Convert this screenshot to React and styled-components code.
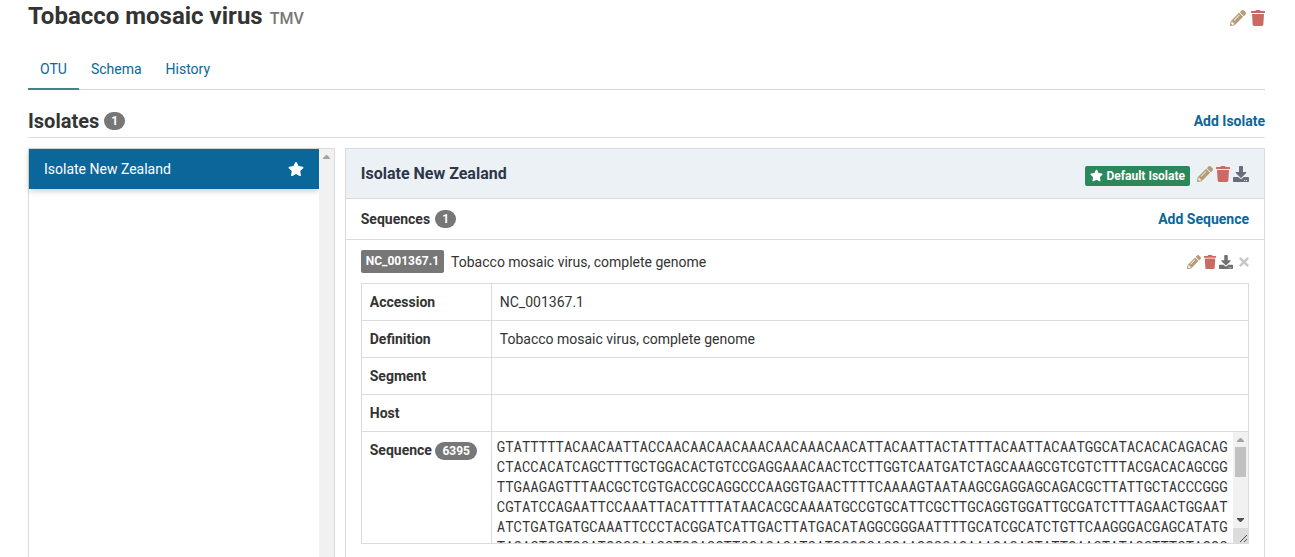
import React from "react";
import styled, { createGlobalStyle } from "styled-components";
import { FaPencilAlt, FaTrash, FaDownload, FaTimes, FaStar } from "react-icons/fa";

const GlobalStyle = createGlobalStyle`
  *, *::before, *::after { box-sizing: border-box; }
  body {
    margin: 0;
    background: #fff;
    color: #333;
    font-family: Roboto, "Liberation Sans", sans-serif;
    font-size: 14px;
    line-height: 20px;
  }
  h1, h2, h3, h4 { margin: 0; }
  a { color: #0b6699; text-decoration: none; }
`;

const Page = styled.main`
  display: flex;
  flex-direction: column;
  height: 100vh;
  overflow: hidden;
  padding: 0 30px 0 28px;
`;

const PageHeader = styled.header`
  display: flex;
  align-items: center;
  justify-content: space-between;
  flex: none;
  height: 34px;
`;

const Title = styled.h1`
  display: flex;
  align-items: baseline;
  gap: 7px;
  font-size: 24px;
  line-height: 32px;
  font-weight: 700;
`;

const Abbreviation = styled.small`
  color: #777;
  font-size: 16px;
  font-weight: 500;
`;

const IconGroup = styled.div`
  display: flex;
  align-items: flex-start;
  gap: ${(p) => p.$gap || 3}px;
  height: ${(p) => p.$height || 16}px;
`;

const IconButton = styled.button`
  display: flex;
  justify-content: center;
  width: ${(p) => p.$width || p.$size || 16}px;
  padding: 0;
  border: 0;
  background: none;
  cursor: pointer;
  color: ${(p) => p.$color};
  font-size: ${(p) => p.$size || 16}px;
  svg { flex: none; }
`;

const CloseButton = styled(IconButton)`
  margin-left: 3px;
`;

const Tabs = styled.nav`
  display: flex;
  flex: none;
  margin-top: 14px;
  border-bottom: 1px solid #d5d5d5;
`;

const Tab = styled.a`
  margin-bottom: -1px;
  padding: 11px 12px 9px;
  border-bottom: 2px solid ${(p) => (p.$active ? "#3c8786" : "transparent")};
`;

const SectionHeader = styled.div`
  display: flex;
  align-items: center;
  justify-content: space-between;
  flex: none;
  height: 34px;
  margin: 14px 0 10px;
  border-bottom: 1px solid #dbdbdb;
`;

const Heading = styled.h2`
  display: flex;
  align-items: center;
  gap: 5px;
  font-size: ${(p) => p.$size}px;
  font-weight: 700;
`;

const Badge = styled.span`
  display: inline-block;
  padding: 3px 7px;
  border-radius: 10px;
  background: #777;
  color: #fff;
  font-size: 12px;
  line-height: 12px;
  font-weight: 700;
`;

const AddLink = styled.a`
  font-weight: 700;
`;

const Columns = styled.div`
  display: grid;
  grid-template-columns: minmax(0, 1fr) minmax(0, 3fr);
  gap: 10px;
  flex: 1 0 auto;
`;

const IsolateList = styled.div`
  display: flex;
  min-height: 430px;
  border: 1px solid #dbdbdb;
`;

const IsolateItems = styled.div`
  flex: 1;
  min-width: 0;
`;

const IsolateItem = styled.button`
  display: flex;
  align-items: center;
  justify-content: space-between;
  width: 100%;
  height: 40px;
  padding: 0 15px;
  border: 0;
  background: #0b6699;
  box-shadow: 0 2px 6px rgba(0, 0, 0, 0.2);
  color: #fff;
  font: inherit;
  text-align: left;
  svg { font-size: 16px; }
`;

const ScrollTrack = styled.div`
  position: relative;
  display: flex;
  flex-direction: column;
  flex: none;
  width: 15px;
  background: #f1f1f1;
`;

const ScrollArrow = styled.svg`
  display: block;
  flex: none;
  width: 15px;
  height: 15px;
  fill: ${(p) => (p.$enabled ? "#505050" : "#a3a3a3")};
`;

const ScrollThumb = styled.div`
  height: 30px;
  margin: 0 2px auto;
  background: #c1c1c1;
`;

const ResizeCorner = styled.svg`
  display: block;
  flex: none;
  width: 15px;
  height: 15px;
  background: #dcdcdc;
  stroke: #505050;
`;

const Panel = styled.section`
  border: 1px solid #dbdbdb;
`;

const PanelHeader = styled.header`
  display: flex;
  align-items: center;
  justify-content: space-between;
  height: 50px;
  padding: 0 15px;
  border-bottom: 1px solid #dbdbdb;
  background: #ecf1f6;
  color: #2d3748;
`;

const DefaultLabel = styled.span`
  display: flex;
  align-items: center;
  gap: 3px;
  height: 20px;
  margin-right: 4px;
  padding: 0 5px;
  border-radius: 2px;
  background: #2b885a;
  color: #fff;
  font-size: 12px;
  font-weight: 700;
  svg { font-size: 13px; }
`;

const PanelRow = styled.div`
  display: flex;
  align-items: center;
  justify-content: space-between;
  height: 41px;
  padding: 0 15px;
  border-bottom: 1px solid #dbdbdb;
`;

const SequenceItem = styled.article`
  padding: 10px 15px 15px;
`;

const SequenceHeader = styled.header`
  display: flex;
  align-items: center;
  justify-content: space-between;
  height: 23px;
  margin-bottom: 10px;
`;

const SequenceTitle = styled.div`
  display: flex;
  align-items: center;
  gap: 7px;
`;

const AccessionLabel = styled.span`
  padding: 1px 5px 2px;
  border-radius: 2px;
  background: #777;
  color: #fff;
  font-size: 12px;
  font-weight: 700;
`;

const DataTable = styled.table`
  width: 100%;
  border-collapse: collapse;
  table-layout: fixed;
`;

const HeadCell = styled.th`
  width: 130px;
  height: 37px;
  padding: 8px;
  border: 1px solid #dbdbdb;
  text-align: left;
  vertical-align: top;
  font-weight: 700;
  white-space: nowrap;
`;

const DataCell = styled.td`
  padding: ${(p) => (p.$flush ? "0" : "8px")};
  border: 1px solid #dbdbdb;
`;

const SequenceBox = styled.div`
  display: flex;
  height: 111px;
`;

const SequenceText = styled.textarea`
  flex: 1;
  min-width: 0;
  padding: 5px 0 5px 5px;
  border: 0;
  outline: 0;
  color: #333;
  background: #fff;
  font-family: "Roboto Mono", "Liberation Mono", monospace;
  font-size: 14px;
  line-height: 20px;
  word-break: break-all;
  resize: none;
  scrollbar-width: none;
`;

const GENOME = [
  "GTATTTTTACAACAATTACCAACAACAACAAACAACAAACAACATTACAATTACTATTTACAATTACAATGGCATACACACAGACAG",
  "CTACCACATCAGCTTTGCTGGACACTGTCCGAGGAAACAACTCCTTGGTCAATGATCTAGCAAAGCGTCGTCTTTACGACACAGCGG",
  "TTGAAGAGTTTAACGCTCGTGACCGCAGGCCCAAGGTGAACTTTTCAAAAGTAATAAGCGAGGAGCAGACGCTTATTGCTACCCGGG",
  "CGTATCCAGAATTCCAAATTACATTTTATAACACGCAAAATGCCGTGCATTCGCTTGCAGGTGGATTGCGATCTTTAGAACTGGAAT",
  "ATCTGATGATGCAAATTCCCTACGGATCATTGACTTATGACATAGGCGGGAATTTTGCATCGCATCTGTTCAAGGGACGAGCATATG",
  "TACACTGCTGCATGCCCAACCTGGACGTTCGAGACATCATGCGGCACGAAGGCCAGAAAGACAGTATTGAACTATACCTTTCTAGGC",
].join("");

const FIELDS = [
  ["Accession", "NC_001367.1"],
  ["Definition", "Tobacco mosaic virus, complete genome"],
  ["Segment", ""],
  ["Host", ""],
];

const TAN = "#b39d76";
const RED = "#c96b62";

function UpArrow() {
  return (
    <ScrollArrow viewBox="0 0 15 15" aria-hidden="true">
      <path d="M7 6h1l3 3v1H4V9z" />
    </ScrollArrow>
  );
}

function DownArrow() {
  return (
    <ScrollArrow viewBox="0 0 15 15" aria-hidden="true" $enabled>
      <path d="M4 5h7v1L8 9H7L4 6z" />
    </ScrollArrow>
  );
}

export default function App() {
  return (
    <>
      <GlobalStyle />
      <Page>
        <PageHeader>
          <Title>
            Tobacco mosaic virus <Abbreviation>TMV</Abbreviation>
          </Title>
          <IconGroup $gap={5} $height={14}>
            <IconButton aria-label="Edit OTU" $color={TAN}><FaPencilAlt /></IconButton>
            <IconButton aria-label="Remove OTU" $width={14} $color={RED}><FaTrash /></IconButton>
          </IconGroup>
        </PageHeader>
        <Tabs>
          <Tab href="#otu" $active>OTU</Tab>
          <Tab href="#schema">Schema</Tab>
          <Tab href="#history">History</Tab>
        </Tabs>
        <SectionHeader>
          <Heading $size={20}>Isolates <Badge>1</Badge></Heading>
          <AddLink href="#add-isolate">Add Isolate</AddLink>
        </SectionHeader>
        <Columns>
          <IsolateList>
            <IsolateItems>
              <IsolateItem>Isolate New Zealand <FaStar /></IsolateItem>
            </IsolateItems>
            <ScrollTrack><UpArrow /></ScrollTrack>
          </IsolateList>
          <Panel>
            <PanelHeader>
              <Heading as="h3" $size={16}>Isolate New Zealand</Heading>
              <IconGroup>
                <DefaultLabel><FaStar />Default Isolate</DefaultLabel>
                <IconButton aria-label="Edit isolate" $color={TAN}><FaPencilAlt /></IconButton>
                <IconButton aria-label="Remove isolate" $width={14} $color={RED}><FaTrash /></IconButton>
                <IconButton aria-label="Download isolate" $color="#666e7c"><FaDownload /></IconButton>
              </IconGroup>
            </PanelHeader>
            <PanelRow>
              <Heading as="h4" $size={14}>Sequences <Badge>1</Badge></Heading>
              <AddLink href="#add-sequence">Add Sequence</AddLink>
            </PanelRow>
            <SequenceItem>
              <SequenceHeader>
                <SequenceTitle>
                  <AccessionLabel>NC_001367.1</AccessionLabel>
                  Tobacco mosaic virus, complete genome
                </SequenceTitle>
                <IconGroup $height={14}>
                  <IconButton aria-label="Edit sequence" $size={14} $color={TAN}><FaPencilAlt /></IconButton>
                  <IconButton aria-label="Remove sequence" $size={14} $width={12} $color={RED}><FaTrash /></IconButton>
                  <IconButton aria-label="Download sequence" $size={14} $color="#707070"><FaDownload /></IconButton>
                  <CloseButton aria-label="Close" $size={14} $width={10} $color="#c8c8c8"><FaTimes /></CloseButton>
                </IconGroup>
              </SequenceHeader>
              <DataTable>
                <tbody>
                  {FIELDS.map(([name, value]) => (
                    <tr key={name}>
                      <HeadCell scope="row">{name}</HeadCell>
                      <DataCell>{value}</DataCell>
                    </tr>
                  ))}
                  <tr>
                    <HeadCell scope="row">
                      <label htmlFor="sequence">Sequence</label> <Badge>6395</Badge>
                    </HeadCell>
                    <DataCell $flush>
                      <SequenceBox>
                        <SequenceText id="sequence" readOnly value={GENOME} />
                        <ScrollTrack>
                          <UpArrow />
                          <ScrollThumb />
                          <DownArrow />
                          <ResizeCorner viewBox="0 0 15 15" aria-hidden="true">
                            <path d="M7 14l7-7M11 14l3-3" />
                          </ResizeCorner>
                        </ScrollTrack>
                      </SequenceBox>
                    </DataCell>
                  </tr>
                </tbody>
              </DataTable>
            </SequenceItem>
          </Panel>
        </Columns>
      </Page>
    </>
  );
}
